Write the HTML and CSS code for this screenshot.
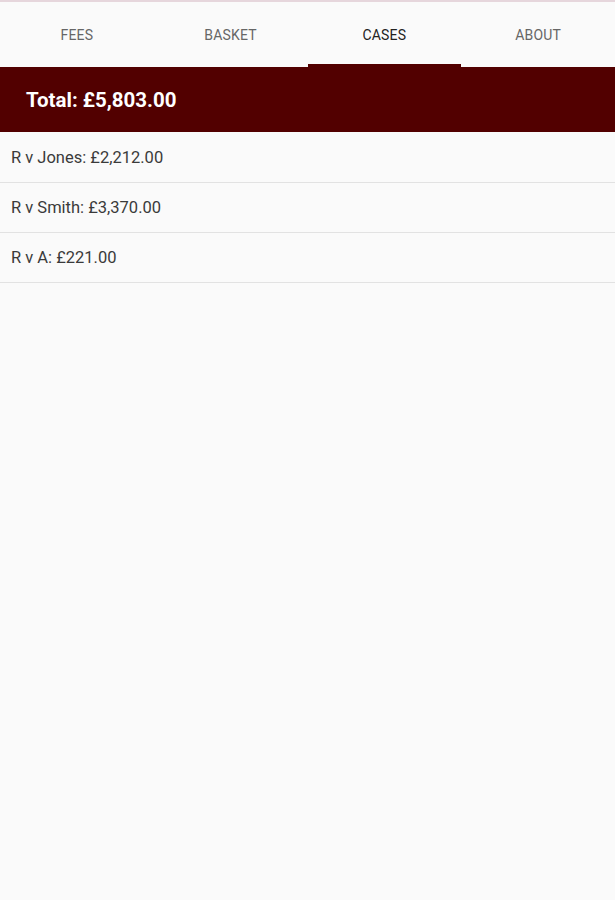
FILE: index.html
```html
<!DOCTYPE html>
<html>
<head>
<meta charset="utf-8">
<link rel="stylesheet" href="styles.css">
</head>
<body>
<div class="topline"></div>
<nav class="tabs">
  <div class="tab">FEES</div>
  <div class="tab">BASKET</div>
  <div class="tab active">CASES</div>
  <div class="tab">ABOUT</div>
</nav>
<header class="total">Total: £5,803.00</header>
<ul class="cases">
  <li class="case">R v Jones: £2,212.00</li>
  <li class="case">R v Smith: £3,370.00</li>
  <li class="case">R v A: £221.00</li>
</ul>
</body>
</html>
```
FILE: styles.css
```css
html, body {
  margin: 0;
  padding: 0;
  background: #fafafa;
  font-family: Roboto, "Liberation Sans", sans-serif;
}
.topline {
  height: 2px;
  background: #e6d6dc;
}
.tabs {
  display: grid;
  grid-template-columns: repeat(4, 1fr);
  height: 65px;
  background: #fafafa;
}
.tab {
  display: flex;
  align-items: center;
  justify-content: center;
  font-size: 14px;
  color: #666;
  letter-spacing: 0.2px;
  border-bottom: 3px solid transparent;
  padding-top: 3px;
}
.tab.active {
  color: #222;
  border-bottom-color: #520000;
}
.total {
  height: 65px;
  background: #520000;
  color: #fff;
  font-size: 20.5px;
  font-weight: 700;
  display: flex;
  align-items: center;
  padding-left: 26px;
  padding-top: 1px;
  box-sizing: border-box;
}
.cases {
  list-style: none;
  margin: 1px 0 0;
  padding: 0;
}
.case {
  height: 49px;
  border-bottom: 1px solid #e2e2e2;
  display: flex;
  align-items: center;
  padding-left: 11px;
  font-size: 16.5px;
  color: #3a3a3a;
}
```
